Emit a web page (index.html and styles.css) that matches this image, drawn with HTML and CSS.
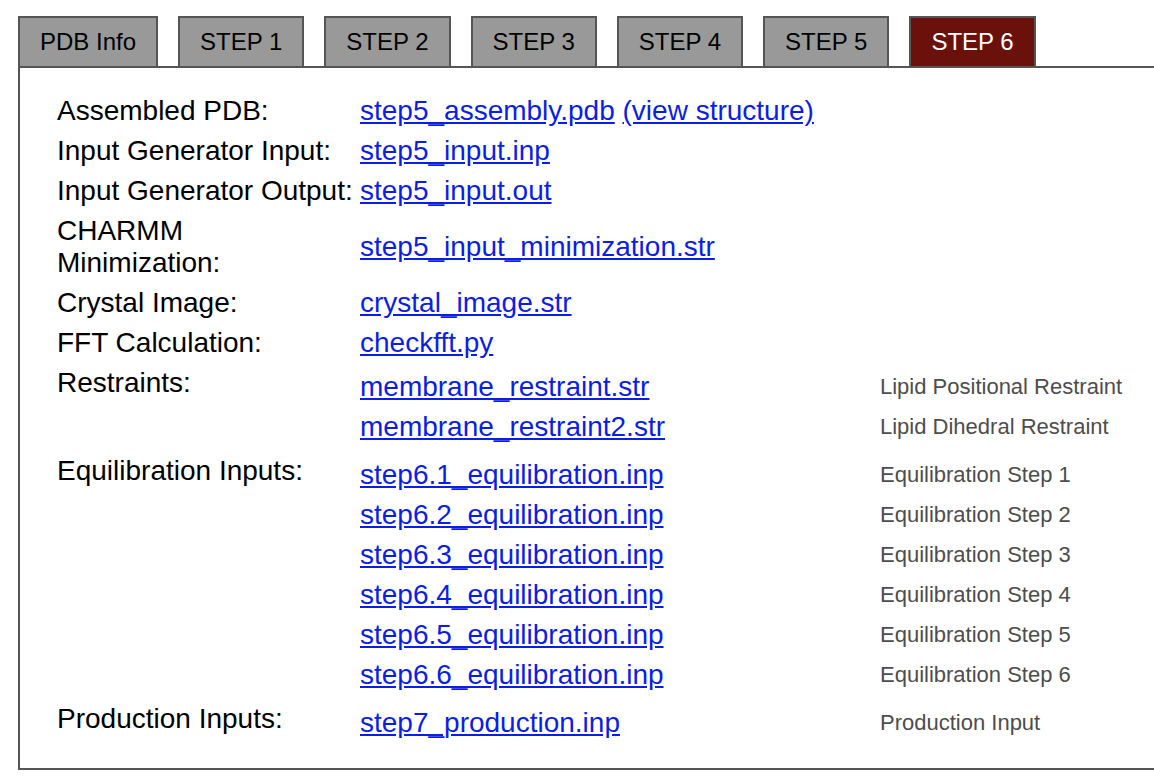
FILE: index.html
```html
<!DOCTYPE html>
<html>
<head>
<meta charset="utf-8">
<title>STEP 6</title>
<link rel="stylesheet" href="styles.css">
</head>
<body>
<div class="page">
  <nav class="tabs">
    <span class="tab">PDB Info</span>
    <span class="tab">STEP 1</span>
    <span class="tab">STEP 2</span>
    <span class="tab">STEP 3</span>
    <span class="tab">STEP 4</span>
    <span class="tab">STEP 5</span>
    <span class="tab active">STEP 6</span>
  </nav>
  <section class="panel">
    <div class="entry">
      <div class="label">Assembled PDB:</div>
      <div class="file"><a href="#">step5_assembly.pdb</a> <a href="#">(view structure)</a></div>
    </div>
    <div class="entry">
      <div class="label">Input Generator Input:</div>
      <div class="file"><a href="#">step5_input.inp</a></div>
    </div>
    <div class="entry">
      <div class="label">Input Generator Output:</div>
      <div class="file"><a href="#">step5_input.out</a></div>
    </div>
    <div class="entry">
      <div class="label">CHARMM<br>Minimization:</div>
      <div class="file"><a href="#">step5_input_minimization.str</a></div>
    </div>
    <div class="entry">
      <div class="label">Crystal Image:</div>
      <div class="file"><a href="#">crystal_image.str</a></div>
    </div>
    <div class="entry">
      <div class="label">FFT Calculation:</div>
      <div class="file"><a href="#">checkfft.py</a></div>
    </div>
    <div class="entry group">
      <div class="label">Restraints:</div>
      <div class="sublist">
        <div class="subrow"><a href="#">membrane_restraint.str</a><span class="desc">Lipid Positional Restraint</span></div>
        <div class="subrow"><a href="#">membrane_restraint2.str</a><span class="desc">Lipid Dihedral Restraint</span></div>
      </div>
    </div>
    <div class="entry group">
      <div class="label">Equilibration Inputs:</div>
      <div class="sublist">
        <div class="subrow"><a href="#">step6.1_equilibration.inp</a><span class="desc">Equilibration Step 1</span></div>
        <div class="subrow"><a href="#">step6.2_equilibration.inp</a><span class="desc">Equilibration Step 2</span></div>
        <div class="subrow"><a href="#">step6.3_equilibration.inp</a><span class="desc">Equilibration Step 3</span></div>
        <div class="subrow"><a href="#">step6.4_equilibration.inp</a><span class="desc">Equilibration Step 4</span></div>
        <div class="subrow"><a href="#">step6.5_equilibration.inp</a><span class="desc">Equilibration Step 5</span></div>
        <div class="subrow"><a href="#">step6.6_equilibration.inp</a><span class="desc">Equilibration Step 6</span></div>
      </div>
    </div>
    <div class="entry group">
      <div class="label">Production Inputs:</div>
      <div class="sublist">
        <div class="subrow"><a href="#">step7_production.inp</a><span class="desc">Production Input</span></div>
      </div>
    </div>
  </section>
</div>
</body>
</html>
```
FILE: styles.css
```css
html, body {
  margin: 0;
  padding: 0;
  background: #ffffff;
}

body {
  font-family: "Liberation Sans", Arial, Helvetica, sans-serif;
  color: #000000;
  overflow: hidden;
}

.page {
  padding: 16px 0 0 18px;
}

.tabs {
  display: flex;
  gap: 20px;
  align-items: flex-end;
}

.tab {
  display: block;
  height: 48px;
  line-height: 48px;
  padding: 0 20px;
  border: 2px solid #555555;
  background: #999999;
  color: #000000;
  font-size: 24px;
  margin-bottom: -2px;
  position: relative;
  z-index: 1;
}

.tab.active {
  background: #6a110b;
  color: #ffffff;
}

.panel {
  border-top: 2px solid #555555;
  border-left: 2px solid #555555;
  border-bottom: 2px solid #555555;
  padding: 23px 0 21px 37px;
  font-size: 28px;
}

.entry {
  display: grid;
  grid-template-columns: 303px 1fr;
  align-items: center;
}

.entry.group {
  align-items: start;
}

.label {
  padding: 4px 0;
  line-height: 32px;
  white-space: nowrap;
}

.file {
  padding: 4px 0;
  line-height: 32px;
  white-space: nowrap;
}

.sublist {
  padding: 4px 0;
}

.subrow {
  display: grid;
  grid-template-columns: 520px auto;
  align-items: center;
  padding: 4px 0;
  line-height: 32px;
  white-space: nowrap;
}

a {
  color: #0b1ee6;
  text-decoration: underline;
}

.desc {
  font-size: 22px;
  color: #4d4d4d;
}
```
